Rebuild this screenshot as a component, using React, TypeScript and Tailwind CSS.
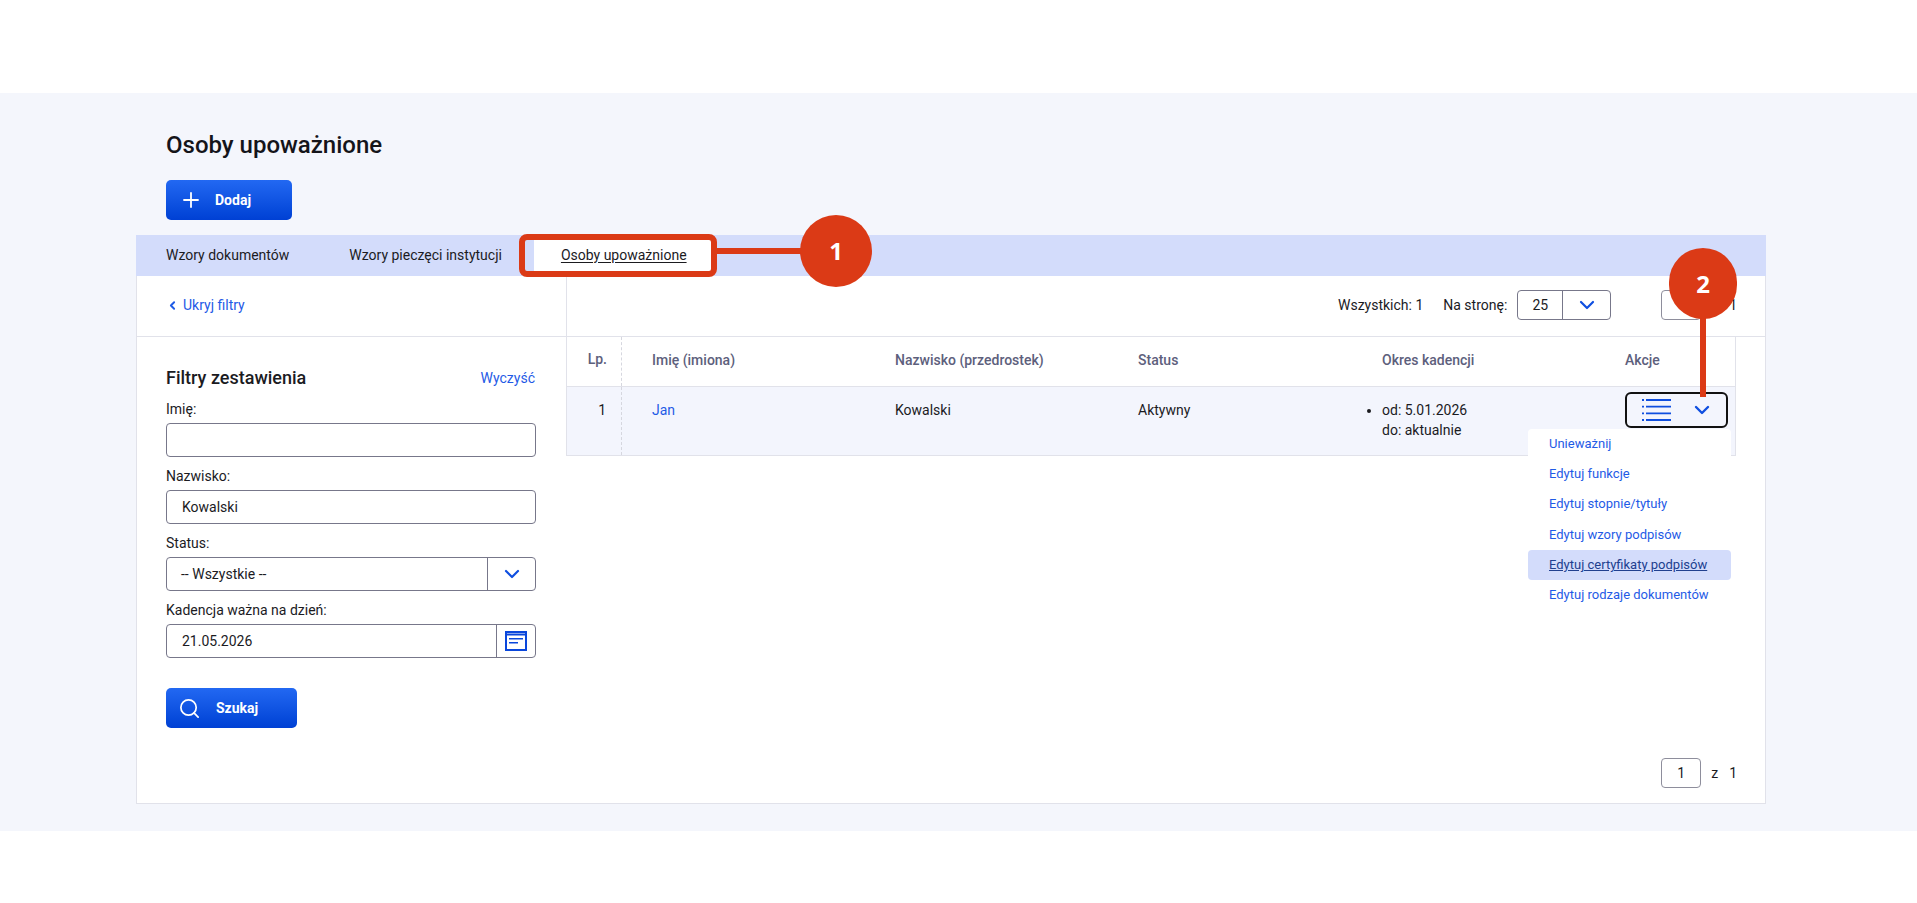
import { ChevronDown, ChevronLeft, Plus, Search } from "lucide-react"

const filterLabel = "block text-[14px] leading-[20px] text-[#1b1b1f]"
const fieldBox = "flex h-[34px] w-[370px] items-center rounded-[4px] border border-[#77778a] bg-white text-[14px] text-[#1b1b1f]"
const blueButton = "flex h-[40px] items-center rounded-[5px] bg-gradient-to-b from-[#2268f2] to-[#0040d4] text-[14px] font-bold text-white"

const menuItems = ["Unieważnij", "Edytuj funkcje", "Edytuj stopnie/tytuły", "Edytuj wzory podpisów", "Edytuj certyfikaty podpisów", "Edytuj rodzaje dokumentów"]

function PageBox() {
  return (
    <div className="flex items-center text-[14px] text-[#1b1b1f]">
      <div className="flex h-[30px] w-[40px] items-center justify-center rounded-[4px] border border-[#8e8e9c]">1</div>
      <span className="ml-[10px]">z</span>
      <span className="ml-[11px]">1</span>
    </div>
  )
}

function ListIcon() {
  return (
    <svg width="29" height="22" viewBox="0 0 29 22" className="text-[#0f4fe0]">
      <path d="M0 1h2M4 1h25M0 7.7h2M4 7.7h25M0 14.3h2M4 14.3h25M0 21h2M4 21h25" stroke="currentColor" strokeWidth="1.8" fill="none" />
    </svg>
  )
}

function CalendarIcon() {
  return (
    <svg width="22" height="20" viewBox="0 0 22 20" className="text-[#0a47dc]">
      <path d="M1 1h20v18H1z" stroke="currentColor" strokeWidth="2" fill="none" />
      <path d="M1 3.5h20" stroke="currentColor" strokeWidth="2" fill="none" />
      <path d="M4 7.75h14M4 11.75h9" stroke="currentColor" strokeWidth="1.5" fill="none" />
    </svg>
  )
}

export default function App() {
  return (
    <div className="relative h-[903px] w-[1917px] overflow-hidden bg-white pt-[93px] font-['Roboto',sans-serif] text-[#1b1b1f]">
      <div className="h-[738px] bg-[#f4f6fc] pl-[136px] pr-[151px]">
        <h1 className="pl-[30px] pt-[36px] text-[24px] font-medium leading-[32px] text-[#14141a]">Osoby upoważnione</h1>
        <div className="pl-[30px] pt-[19px]">
          <button className={`${blueButton} w-[126px] pl-[13px]`}>
            <Plus size={24} strokeWidth={1.8} />
            <span className="ml-[12px]">Dodaj</span>
          </button>
        </div>

        <div className="mt-[15px] h-[569px] border-x border-b border-[#e1e2ea] bg-white">
          {/* tabs */}
          <div className="-mx-px flex h-[41px] items-center bg-[#d3dcfb] text-[14px]">
            <span className="ml-[30px]">Wzory dokumentów</span>
            <span className="ml-[60px]">Wzory pieczęci instytucji</span>
            <span className="ml-[32px] flex h-full w-[179px] items-center bg-white pl-[27px] underline underline-offset-2">Osoby upoważnione</span>
          </div>

          <div className="flex h-[527px]">
            {/* filters */}
            <div className="w-[429px] shrink-0">
              <div className="flex h-[61px] items-center border-b border-[#e1e2ea] pl-[29px] pb-[2px] text-[14px] text-[#1f5be6]">
                <ChevronLeft size={13} strokeWidth={3.5} />
                <span className="ml-[4px]">Ukryj filtry</span>
              </div>
              <div className="pl-[29px] pt-[28px]">
                <div className="flex w-[369px] items-center justify-between">
                  <h2 className="text-[18px] font-medium leading-[26px]">Filtry zestawienia</h2>
                  <a className="text-[14px] leading-[20px] text-[#1f5be6]">Wyczyść</a>
                </div>
                <label className={`${filterLabel} mt-[8px] mb-[4px]`}>Imię:</label>
                <div className={fieldBox}></div>
                <label className={`${filterLabel} mt-[9px] mb-[4px]`}>Nazwisko:</label>
                <div className={`${fieldBox} pl-[15px]`}>Kowalski</div>
                <label className={`${filterLabel} mt-[9px] mb-[4px]`}>Status:</label>
                <div className={fieldBox}>
                  <span className="flex-1 pl-[14px]">-- Wszystkie --</span>
                  <span className="flex h-full w-[48px] items-center justify-center border-l border-[#77778a] text-[#0f4fe0]">
                    <ChevronDown size={24} strokeWidth={2.2} />
                  </span>
                </div>
                <label className={`${filterLabel} mt-[9px] mb-[4px]`}>Kadencja ważna na dzień:</label>
                <div className={fieldBox}>
                  <span className="flex-1 pl-[15px]">21.05.2026</span>
                  <span className="flex h-full w-[39px] items-center justify-center border-l border-[#77778a]">
                    <CalendarIcon />
                  </span>
                </div>
                <button className={`${blueButton} mt-[30px] w-[131px] pl-[12px]`}>
                  <Search size={23} strokeWidth={1.8} />
                  <span className="ml-[15px]">Szukaj</span>
                </button>
              </div>
            </div>

            {/* table */}
            <div className="flex-1">
              <div className="flex h-[61px] items-center border-b border-l border-[#e1e2ea] pb-[2px] pl-[771px] text-[14px]">
                <span>Wszystkich: 1</span>
                <span className="ml-[20px]">Na stronę:</span>
                <div className="ml-[10px] flex h-[30px] w-[94px] items-center rounded-[4px] border border-[#77778a]">
                  <span className="flex h-full w-[45px] items-center justify-center border-r border-[#77778a]">25</span>
                  <span className="flex flex-1 items-center justify-center text-[#0f4fe0]">
                    <ChevronDown size={24} strokeWidth={2.2} />
                  </span>
                </div>
                <div className="ml-[50px]"><PageBox /></div>
              </div>

              <div className="w-[1170px] border-x border-[#e1e2ea]">
                <div className="flex h-[50px] items-center border-b border-[#e1e2ea] text-[14px] font-medium text-[#5d607c]">
                  <span className="h-full w-[55px] border-r border-dashed border-[#d6d7df] pr-[14px] text-right leading-[44px]">Lp.</span>
                  <div className="flex h-full flex-1 items-center pb-[3px] pl-[30px]">
                    <span className="w-[243px]">Imię (imiona)</span>
                    <span className="w-[243px]">Nazwisko (przedrostek)</span>
                    <span className="w-[244px]">Status</span>
                    <span className="w-[243px]">Okres kadencji</span>
                    <span>Akcje</span>
                  </div>
                </div>
                <div className="flex h-[69px] border-b border-[#e1e2ea] bg-[#f3f5fd] text-[14px]">
                  <span className="h-full w-[55px] border-r border-dashed border-[#d6d7df] pr-[15px] pt-[13px] text-right leading-[20px]">1</span>
                  <div className="flex flex-1 pl-[30px] pt-[13px] leading-[20px]">
                    <a className="w-[243px] text-[#1f5be6]">Jan</a>
                    <span className="w-[243px]">Kowalski</span>
                    <span className="w-[244px]">Aktywny</span>
                    <ul className="w-[243px] list-disc">
                      <li>od: 5.01.2026<br />do: aktualnie</li>
                    </ul>
                    <div className="-mt-[8px] flex h-[36px] w-[103px] items-center justify-between rounded-[6px] border-2 border-[#111] pl-[15px] pr-[12px] text-[#0f4fe0]">
                      <ListIcon />
                      <ChevronDown size={24} strokeWidth={2.4} />
                    </div>
                  </div>
                </div>
              </div>

              <div className="flex justify-end pr-[28px] pt-[302px]"><PageBox /></div>
            </div>
          </div>
        </div>
      </div>

      {/* menu over the table row */}
      <div className="absolute left-[1528px] top-[429px] w-[203px] rounded-[4px] bg-white text-[13px] text-[#1f5be6]">
        {menuItems.map((item) => (
          <div
            key={item}
            className={`flex h-[30.3px] items-center rounded-[4px] pb-[1px] pl-[21px] ${item === "Edytuj certyfikaty podpisów" ? "bg-[#d3dcfb] text-[#21408f] underline" : ""}`}
          >
            {item}
          </div>
        ))}
      </div>

      {/* annotations */}
      <div className="absolute left-[519px] top-[234px] h-[43px] w-[198px] rounded-[8px] border-[6px] border-[#db3a16]"></div>
      <div className="absolute left-[717px] top-[248px] h-[6px] w-[90px] bg-[#db3a16]"></div>
      <div className="absolute left-[800px] top-[215px] flex h-[72px] w-[72px] items-center justify-center rounded-full bg-[#db3a16] font-['Open_Sans',sans-serif] text-[24px] font-bold text-white">1</div>
      <div className="absolute left-[1700px] top-[300px] h-[97px] w-[6px] bg-[#db3a16]"></div>
      <div className="absolute left-[1669px] top-[248px] flex h-[71px] w-[68px] items-center justify-center rounded-full bg-[#db3a16] font-['Open_Sans',sans-serif] text-[24px] font-bold text-white">2</div>
    </div>
  )
}
